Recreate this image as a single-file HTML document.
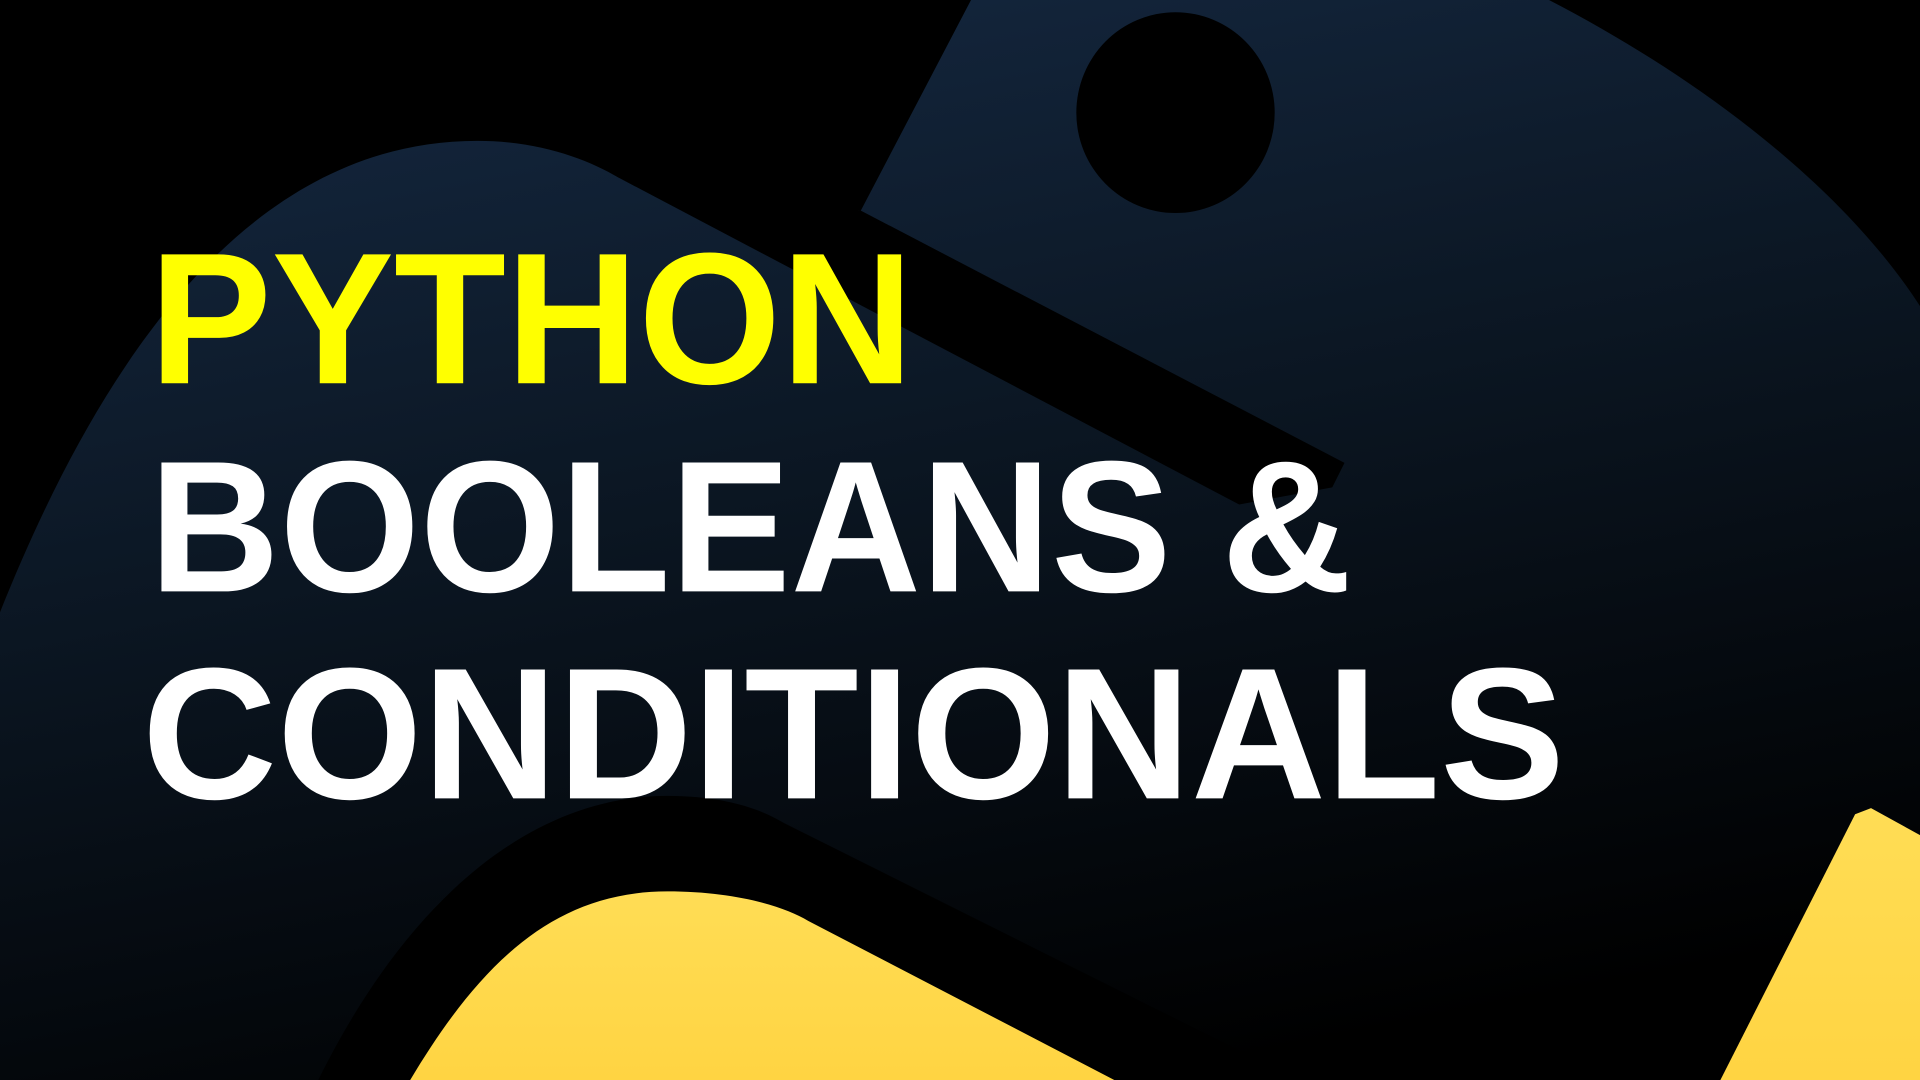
<!DOCTYPE html>
<html><head><meta charset="utf-8"><style>
html,body{margin:0;padding:0;background:#000;overflow:hidden}
svg{display:block}
</style></head><body>
<svg width="1920" height="1080" viewBox="0 0 1568 882" preserveAspectRatio="none" xmlns="http://www.w3.org/2000/svg">
<defs>
<linearGradient id="g" x1="0.25" y1="0" x2="0.6" y2="1">
<stop offset="0" stop-color="#14273f"/>
<stop offset="0.5" stop-color="#0a141f"/>
<stop offset="1" stop-color="#000"/>
</linearGradient>
<linearGradient id="y" x1="0" y1="0" x2="0" y2="1">
<stop offset="0" stop-color="#ffdd55"/>
<stop offset="1" stop-color="#ffd442"/>
</linearGradient>
</defs>
<rect width="1568" height="882" fill="#000"/>
<!-- blue -->
<path d="M0,500 C80,300 200,115 390,115 C440,115 480,130 505,145 L703,172 L793,0 L1265,0 C1400,70 1510,160 1568,250 L1568,882 L0,882 Z" fill="url(#g)"/>
<!-- black stripe -->
<path d="M480,128 L703,172 L1098,378 L1088,398 L1012,412 L505,145 Z" fill="#000"/>
<!-- black around yellow -->
<path d="M260,882 C330,740 430,650 545,650 C590,650 620,660 640,672 L1060,882 Z" fill="#000"/>
<!-- eye -->
<ellipse cx="960" cy="92" rx="81" ry="82" fill="#000"/>
<!-- yellow -->
<path d="M335,882 C390,790 450,728 545,728 C600,728 640,740 660,752 L910,882 Z" fill="url(#y)"/>
<path d="M1405,882 L1515,665 L1528,660 L1568,682 L1568,882 Z" fill="url(#y)"/>
<g font-family="Liberation Sans, sans-serif" font-weight="bold" font-size="153">
<text x="122" y="313" fill="#ffff00" textLength="624" lengthAdjust="spacingAndGlyphs">PYTHON</text>
<text x="122" y="483" fill="#fff" textLength="982" lengthAdjust="spacingAndGlyphs">BOOLEANS &amp;</text>
<text x="116" y="652" fill="#fff" textLength="1162" lengthAdjust="spacingAndGlyphs">CONDITIONALS</text>
</g>
</svg>
</body></html>
